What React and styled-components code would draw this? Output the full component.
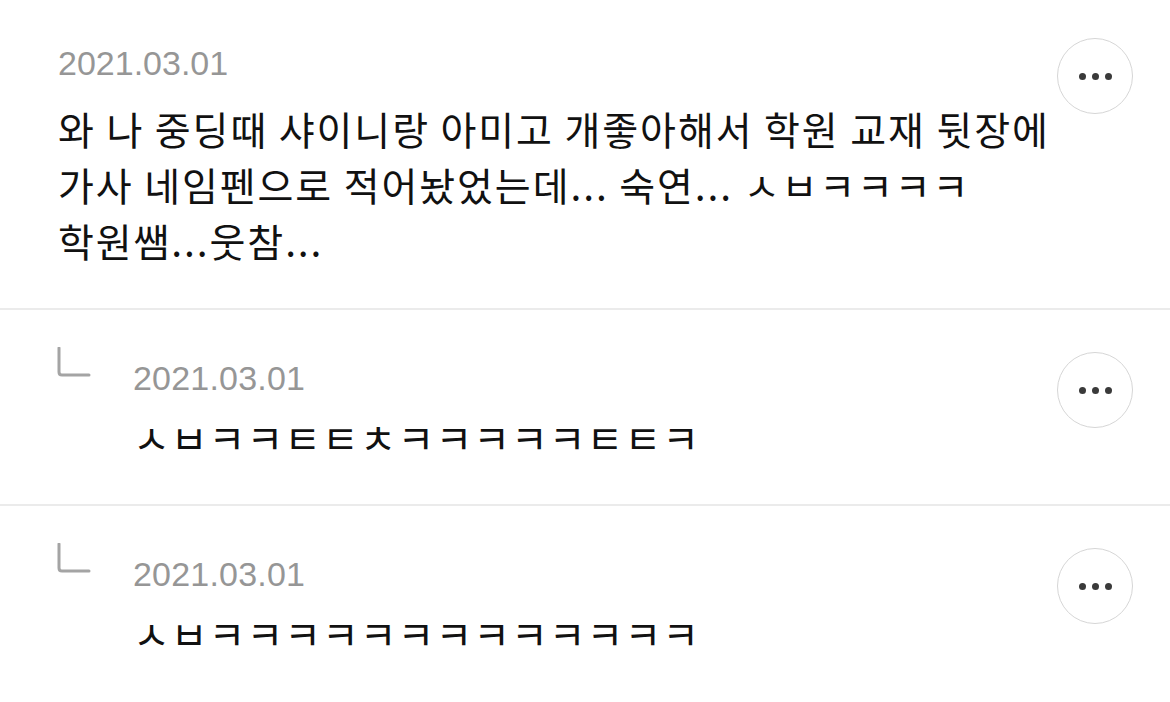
import React from 'react';
import styled, { createGlobalStyle } from 'styled-components';

const GlobalStyle = createGlobalStyle`
    html, body {
        margin: 0;
        padding: 0;
        background: #ffffff;
    }
    body {
        font-family: "Liberation Sans", "Noto Sans CJK KR", sans-serif;
        -webkit-font-smoothing: antialiased;
    }
`

const List = styled.div`
    width: 1170px;
    display: flex;
    flex-direction: column;
`

const Item = styled.div`
    display: flex;
    align-items: flex-start;
    padding: ${props => props.$reply ? '37px 37px 42px 57px' : '38px 37px 40px 58px'};
    border-bottom: ${props => props.$last ? 'none' : '2px solid #ebebeb'};
`

const Corner = styled.svg`
    flex: none;
    width: 34px;
    height: 30px;
    margin-right: 42px;
`

const Body = styled.div`
    flex: 1;
    min-width: 0;
    display: flex;
    flex-direction: column;
    padding-top: ${props => props.$reply ? '11px' : '5px'};
`

const Date = styled.div`
    font-family: "Liberation Sans", Arial, sans-serif;
    font-size: 34px;
    line-height: 40px;
    color: #969696;
    letter-spacing: ${props => props.$reply ? '0.2px' : '0'};
`

const Text = styled.div`
    margin-top: ${props => props.$reply ? '14px' : '17px'};
    font-family: "Noto Sans CJK KR", "Liberation Sans", sans-serif;
    font-size: ${props => props.$reply ? '40px' : '39px'};
    line-height: ${props => props.$reply ? '50px' : '56px'};
    color: #111111;
    letter-spacing: ${props => props.$reply ? '1px' : '1.9px'};
    word-break: keep-all;
    width: 1010px;
`

const MoreButton = styled.button`
    flex: none;
    width: 76px;
    height: 76px;
    margin-top: ${props => props.$reply ? '5px' : '0'};
    border-radius: 50%;
    border: 1.5px solid #d6d6d6;
    background: #ffffff;
    display: flex;
    align-items: center;
    justify-content: center;
    gap: 6px;
    padding: 0;
`

const Dot = styled.span`
    width: 7px;
    height: 7px;
    border-radius: 50%;
    background: #3a3a3a;
`

function ReplyCorner() {
    return (
        <Corner viewBox="0 0 34 30">
            <path d="M2 1 V25 Q2 28 5 28 H32" fill="none" stroke="#a4a4a4" strokeWidth="3" strokeLinecap="round" />
        </Corner>
    )
}

function More({ reply }) {
    return (
        <MoreButton $reply={reply}>
            <Dot />
            <Dot />
            <Dot />
        </MoreButton>
    )
}

const comments = [
    {
        date: '2021.03.01',
        text: '와 나 중딩때 샤이니랑 아미고 개좋아해서 학원 교재 뒷장에 가사 네임펜으로 적어놨었는데... 숙연... ㅅㅂㅋㅋㅋㅋ 학원쌤...웃참...',
        reply: false,
    },
    {
        date: '2021.03.01',
        text: 'ㅅㅂㅋㅋㅌㅌㅊㅋㅋㅋㅋㅋㅌㅌㅋ',
        reply: true,
    },
    {
        date: '2021.03.01',
        text: 'ㅅㅂㅋㅋㅋㅋㅋㅋㅋㅋㅋㅋㅋㅋㅋ',
        reply: true,
    },
];

function App() {
    return (
        <>
            <GlobalStyle />
            <List>
                {comments.map((c, i) => (
                    <Item key={i} $reply={c.reply} $last={i === comments.length - 1}>
                        {c.reply && <ReplyCorner />}
                        <Body $reply={c.reply}>
                            <Date $reply={c.reply}>{c.date}</Date>
                            <Text $reply={c.reply}>{c.text}</Text>
                        </Body>
                        <More reply={c.reply} />
                    </Item>
                ))}
            </List>
        </>
    )
}

export default App;
